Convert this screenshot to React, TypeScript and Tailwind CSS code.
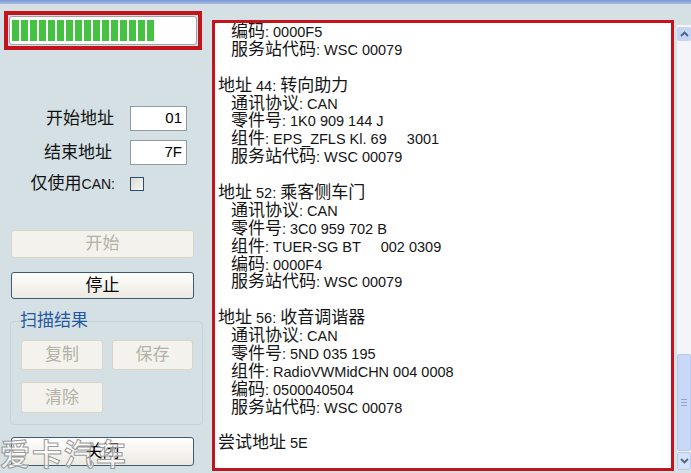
import React from "react";

// 扫描结果文本（滚动到中间位置）
const lines: [string, boolean][] = [
  ["编码: 0000F5", true],
  ["服务站代码: WSC 00079", true],
  ["", false],
  ["地址 44: 转向助力", false],
  ["通讯协议: CAN", true],
  ["零件号: 1K0 909 144 J", true],
  ["组件: EPS_ZFLS Kl. 69     3001", true],
  ["服务站代码: WSC 00079", true],
  ["", false],
  ["地址 52: 乘客侧车门", false],
  ["通讯协议: CAN", true],
  ["零件号: 3C0 959 702 B", true],
  ["组件: TUER-SG BT     002 0309", true],
  ["编码: 0000F4", true],
  ["服务站代码: WSC 00079", true],
  ["", false],
  ["地址 56: 收音调谐器", false],
  ["通讯协议: CAN", true],
  ["零件号: 5ND 035 195", true],
  ["组件: RadioVWMidCHN 004 0008", true],
  ["编码: 0500040504", true],
  ["服务站代码: WSC 00078", true],
  ["", false],
  ["尝试地址 5E", false],
];

// 中文字符比西文略大
const Mixed = ({ text }: { text: string }) => (
  <>
    {text.split(/([\u4e00-\u9fff]+)/).map((part, i) =>
      i % 2 ? (
        <span key={i} className="text-[17px]">
          {part}
        </span>
      ) : (
        part
      )
    )}
  </>
);

const Button = ({
  label,
  disabled,
  className,
}: {
  label: string;
  disabled?: boolean;
  className: string;
}) => (
  <div
    className={
      disabled
        ? `flex items-center justify-center rounded-[3px] border border-[#d9d6c8] bg-[#f3f2ec] text-[17px] text-[#b4b2a6] ${className}`
        : `flex items-center justify-center rounded-[3px] border border-[#405a72] bg-gradient-to-b from-white to-[#ebe9e0] text-[17px] text-black ${className}`
    }
  >
    {label}
  </div>
);

const App: React.FC = () => {
  return (
    <div
      className="relative flex h-[473px] w-[691px] flex-col overflow-hidden bg-[#d4e0e4]"
      style={{ fontFamily: '"Liberation Sans", "Noto Sans CJK SC", sans-serif' }}
    >
      <div className="h-[4px] bg-gradient-to-b from-[#7a98d4] to-[#a7bce4]" />

      <div className="flex flex-1">
        {/* 左侧控制区 */}
        <div className="flex w-[212px] flex-col">
          <div className="ml-[4px] mt-[7px] h-[39px] w-[198px] border-[4px] border-[#c3141d] p-[1px]">
            <div className="flex h-full items-center rounded-[3px] border border-[#9aa4a8] bg-white pl-[2px]">
              <div className="flex gap-[2px]">
                {Array.from({ length: 16 }).map((_, i) => (
                  <div key={i} className="h-[21px] w-[7px] bg-[#45c242]" />
                ))}
              </div>
            </div>
          </div>

          <div className="mt-[56px] flex h-[25px] items-center">
            <span className="w-[114px] text-right text-[17px] text-[#111]">开始地址</span>
            <div className="ml-[16px] flex h-[25px] w-[57px] items-center justify-end border border-[#8e9ba3] bg-white pr-[4px] text-[15px]">
              01
            </div>
          </div>
          <div className="mt-[9px] flex h-[25px] items-center">
            <span className="w-[112px] text-right text-[17px] text-[#111]">结束地址</span>
            <div className="ml-[18px] flex h-[25px] w-[57px] items-center justify-end border border-[#8e9ba3] bg-white pr-[4px] text-[15px]">
              7F
            </div>
          </div>
          <div className="mt-[9px] flex h-[20px] items-center">
            <span className="w-[115px] text-right text-[17px] text-[#111]">
              仅使用<span className="text-[14px]">CAN:</span>
            </span>
            <div className="ml-[15px] h-[14px] w-[14px] border border-[#2a4d6e] bg-gradient-to-br from-[#dcdcd4] to-[#f8f8f4]" />
          </div>

          <Button label="开始" disabled className="ml-[11px] mt-[36px] h-[28px] w-[183px]" />
          <Button label="停止" className="ml-[11px] mt-[14px] h-[27px] w-[183px]" />

          <fieldset className="ml-[10px] mt-[12px] w-[193px] rounded-[4px] border border-[#c5d2d6] px-[9px] pb-[11px]">
            <legend className="text-[17px] leading-[20px] text-[#2457a0]">扫描结果</legend>
            <div className="ml-[1px] mt-[9px] flex gap-[9px]">
              <Button label="复制" disabled className="h-[30px] w-[82px]" />
              <Button label="保存" disabled className="h-[30px] w-[81px]" />
            </div>
            <Button label="清除" disabled className="ml-[1px] mt-[12px] h-[31px] w-[82px]" />
          </fieldset>

          <Button label="关闭" className="ml-[11px] mt-[12px] h-[29px] w-[183px]" />
        </div>

        {/* 右侧结果文本框 */}
        <div className="flex flex-1 pt-[16px]">
          <div className="h-[451px] w-[462px] overflow-hidden border-[3px] border-[#c3141d] bg-white pl-[3px] text-[14.5px] leading-[17.9px] text-[#151515]">
            {lines.map(([text, indent], i) => (
              <div key={i} className={indent ? "h-[17.9px] whitespace-pre pl-[13px]" : "h-[17.9px] whitespace-pre"}>
                <Mixed text={text} />
              </div>
            ))}
          </div>
          <div className="ml-[2px] mt-[5px] flex h-[445px] w-[15px] flex-col border-l border-[#e2e6ec] bg-[#f3f5f9]">
            <div className="mt-[2px] flex h-[14px] items-center justify-center rounded-[2px] bg-[#c5d4f2]">
              <svg width="9" height="6" viewBox="0 0 9 6">
                <path d="M1 5 L4.5 1.5 L8 5" fill="none" stroke="#4d6185" strokeWidth="1.8" />
              </svg>
            </div>
            <div className="flex-1" />
            <div className="flex h-[97px] flex-col items-center justify-center gap-[2px] rounded-[2px] border border-[#b7c8ec] bg-[#c9d8f6]">
              <div className="h-px w-[6px] bg-[#8fa6d4]" />
              <div className="h-px w-[6px] bg-[#8fa6d4]" />
              <div className="h-px w-[6px] bg-[#8fa6d4]" />
            </div>
            <div className="mt-[1px] flex h-[18px] items-center justify-center rounded-[2px] border border-[#b7c8ec] bg-[#d6e2f8]">
              <svg width="9" height="6" viewBox="0 0 9 6">
                <path d="M1 1 L4.5 4.5 L8 1" fill="none" stroke="#4d6185" strokeWidth="1.8" />
              </svg>
            </div>
          </div>
        </div>
      </div>

      {/* 水印 */}
      <div className="pointer-events-none absolute bottom-[-4px] left-0 text-[30px] font-bold tracking-[2px] text-white/60 [-webkit-text-stroke:1px_#9a9a9a]">
        爱卡汽车
      </div>
    </div>
  );
};

export default App;
